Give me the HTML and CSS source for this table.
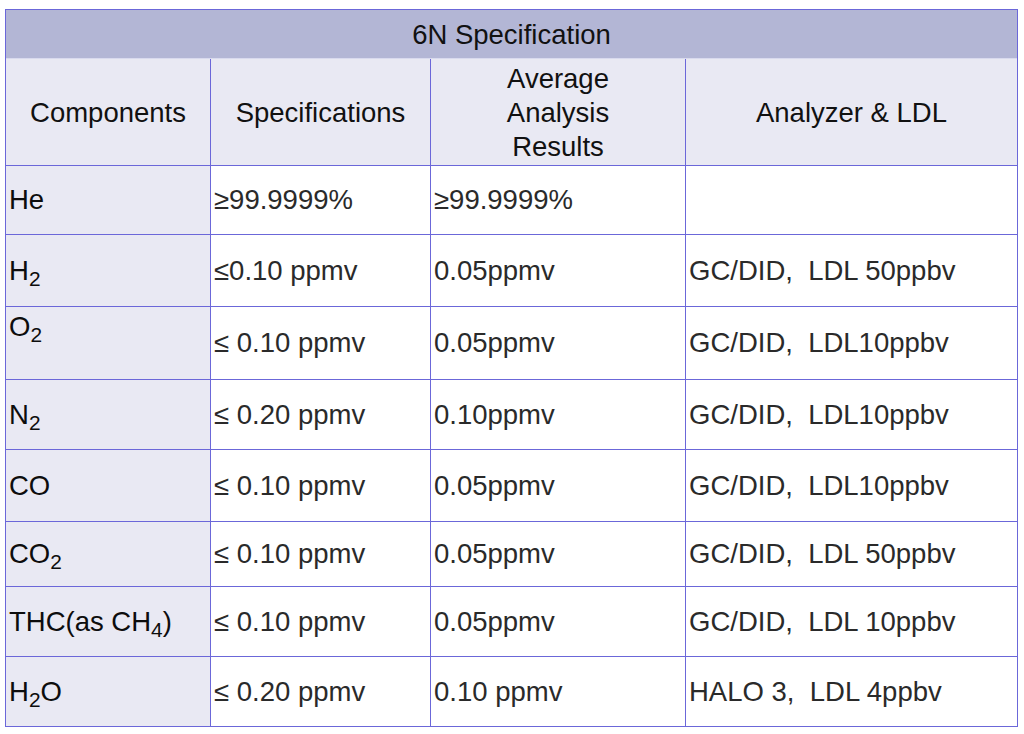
FILE: index.html
```html
<!DOCTYPE html>
<html lang="en">
<head>
<meta charset="utf-8">
<title>6N Specification</title>
<link rel="stylesheet" href="styles.css">
</head>
<body>
<div class="spec">
  <div class="title">6N Specification</div>

  <div class="cell head"><span>Components</span></div>
  <div class="cell head"><span>Specifications</span></div>
  <div class="cell head"><span>Average<br>Analysis<br>Results</span></div>
  <div class="cell head"><span>Analyzer &amp; LDL</span></div>

  <div class="cell comp"><span>He</span></div>
  <div class="cell val"><span>≥99.9999%</span></div>
  <div class="cell val"><span>≥99.9999%</span></div>
  <div class="cell val"><span></span></div>

  <div class="cell comp"><span>H<sub>2</sub></span></div>
  <div class="cell val"><span>≤0.10 ppmv</span></div>
  <div class="cell val"><span>0.05ppmv</span></div>
  <div class="cell val"><span>GC/DID,  LDL 50ppbv</span></div>

  <div class="cell comp top"><span>O<sub>2</sub></span></div>
  <div class="cell val"><span>≤ 0.10 ppmv</span></div>
  <div class="cell val"><span>0.05ppmv</span></div>
  <div class="cell val"><span>GC/DID,  LDL10ppbv</span></div>

  <div class="cell comp"><span>N<sub>2</sub></span></div>
  <div class="cell val"><span>≤ 0.20 ppmv</span></div>
  <div class="cell val"><span>0.10ppmv</span></div>
  <div class="cell val"><span>GC/DID,  LDL10ppbv</span></div>

  <div class="cell comp"><span>CO</span></div>
  <div class="cell val"><span>≤ 0.10 ppmv</span></div>
  <div class="cell val"><span>0.05ppmv</span></div>
  <div class="cell val"><span>GC/DID,  LDL10ppbv</span></div>

  <div class="cell comp"><span>CO<sub>2</sub></span></div>
  <div class="cell val"><span>≤ 0.10 ppmv</span></div>
  <div class="cell val"><span>0.05ppmv</span></div>
  <div class="cell val"><span>GC/DID,  LDL 50ppbv</span></div>

  <div class="cell comp"><span>THC(as CH<sub>4</sub>)</span></div>
  <div class="cell val"><span>≤ 0.10 ppmv</span></div>
  <div class="cell val"><span>0.05ppmv</span></div>
  <div class="cell val"><span>GC/DID,  LDL 10ppbv</span></div>

  <div class="cell comp"><span>H<sub>2</sub>O</span></div>
  <div class="cell val"><span>≤ 0.20 ppmv</span></div>
  <div class="cell val"><span>0.10 ppmv</span></div>
  <div class="cell val"><span>HALO 3,  LDL 4ppbv</span></div>
</div>
</body>
</html>
```

FILE: styles.css
```css
html, body {
  margin: 0;
  background: #ffffff;
}

body {
  padding: 9px 0 0 5px;
  font-family: "Liberation Sans", Arial, sans-serif;
  font-size: 27.5px;
  color: #111111;
}

.spec {
  display: grid;
  width: fit-content;
  grid-template-columns: 204px 219px 254px 331px;
  grid-template-rows: 48px 106px 68px 71px 72px 69px 71px 64px 69px 69px;
  gap: 1px;
  padding: 1px;
  background: #6b67d9;
}

.title {
  grid-column: 1 / -1;
  background: #b3b6d5;
  display: flex;
  align-items: center;
  justify-content: center;
  padding-top: 2px;
  margin-bottom: -1px;
  border-bottom: 1px solid #d9daee;
  color: #111111;
}

.cell {
  display: flex;
  align-items: center;
  padding: 0 3px;
  white-space: pre;
}

.head {
  background: #e9e9f3;
  justify-content: center;
  text-align: center;
  line-height: 34px;
  white-space: normal;
  padding-top: 2px;
}

.comp {
  background: #e9e9f3;
  color: #0d0d0d;
}

.comp.top {
  align-items: flex-start;
  padding-top: 4px;
}

.val {
  background: #ffffff;
  color: #2a2a2a;
}

sub {
  font-size: 0.76em;
  vertical-align: -0.3em;
  line-height: 0;
}
```
